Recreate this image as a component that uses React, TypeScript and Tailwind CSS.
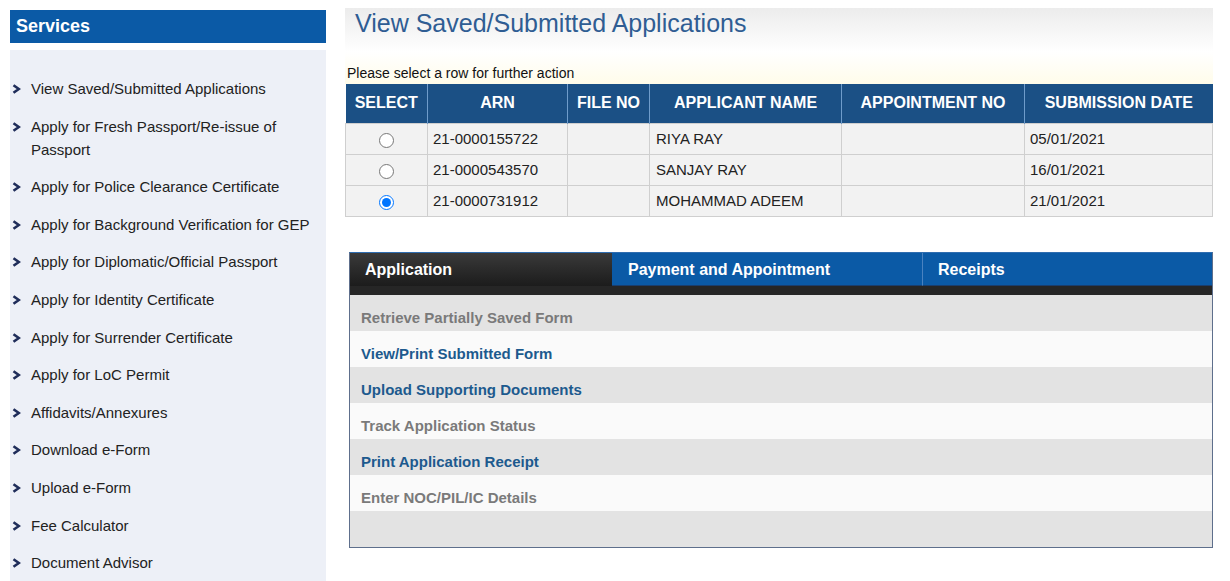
import * as React from 'react';

const services = [
  'View Saved/Submitted Applications',
  'Apply for Fresh Passport/Re-issue of Passport',
  'Apply for Police Clearance Certificate',
  'Apply for Background Verification for GEP',
  'Apply for Diplomatic/Official Passport',
  'Apply for Identity Certificate',
  'Apply for Surrender Certificate',
  'Apply for LoC Permit',
  'Affidavits/Annexures',
  'Download e-Form',
  'Upload e-Form',
  'Fee Calculator',
  'Document Advisor',
];

const rows = [
  { arn: '21-0000155722', name: 'RIYA RAY', date: '05/01/2021' },
  { arn: '21-0000543570', name: 'SANJAY RAY', date: '16/01/2021' },
  { arn: '21-0000731912', name: 'MOHAMMAD ADEEM', date: '21/01/2021' },
];

const actions = [
  { label: 'Retrieve Partially Saved Form', active: false },
  { label: 'View/Print Submitted Form', active: true },
  { label: 'Upload Supporting Documents', active: true },
  { label: 'Track Application Status', active: false },
  { label: 'Print Application Receipt', active: true },
  { label: 'Enter NOC/PIL/IC Details', active: false },
  { label: '', active: false },
];

function Chevron() {
  return (
    <svg width="9" height="10" viewBox="0 0 9 10" className="mt-[7px] shrink-0">
      <path d="M1.5 1.2 L6.8 5 L1.5 8.8" fill="none" stroke="#1f2d5a" strokeWidth="2.6" strokeLinejoin="miter" />
    </svg>
  );
}

export default function App() {
  const [selected, setSelected] = React.useState(2);

  return (
    <div className="w-[1230px] h-[581px] overflow-hidden bg-white flex font-['Liberation_Sans',Arial,sans-serif]">
      {/* sidebar */}
      <div className="ml-[10px] mt-[10px] w-[316px] flex flex-col">
        <div className="h-[33px] bg-[#0b5aa6] text-white font-bold text-[18px] leading-[33px] pl-[6px]">Services</div>
        <div className="mt-[7px] bg-[#edf0f7] min-h-[560px] pt-[27px] pl-[2px] flex flex-col gap-[14.6px]">
          {services.map((s) => (
            <div key={s} className="flex gap-[10px] text-[15px] leading-[23px] text-[#222] pr-[14px]">
              <Chevron />
              <span>{s}</span>
            </div>
          ))}
        </div>
      </div>

      {/* main */}
      <div className="ml-[19px] w-[868px] flex flex-col">
        <div className="mt-[8px] h-[44px] bg-gradient-to-b from-[#ececec] to-white pl-[10px] text-[25px] leading-[30px] text-[#2f5d93]">
          View Saved/Submitted Applications
        </div>
        <div className="h-[32px] bg-gradient-to-b from-white to-[#fffcea] flex items-end pl-[2px] text-[14px] leading-[20px] text-[#111] pb-[1px]">
          Please select a row for further action
        </div>
        <table className="border-collapse w-full text-[15px]">
          <thead>
            <tr className="bg-[#1b5085] text-white font-bold text-[16px] h-[39px]">
              <th className="w-[82px] border-r border-[#6f9ccb] font-bold">SELECT</th>
              <th className="w-[140px] border-r border-[#6f9ccb] font-bold">ARN</th>
              <th className="w-[82px] border-r border-[#6f9ccb] font-bold">FILE NO</th>
              <th className="w-[192px] border-r border-[#6f9ccb] font-bold">APPLICANT NAME</th>
              <th className="w-[183px] border-r border-[#6f9ccb] font-bold">APPOINTMENT NO</th>
              <th className="font-bold">SUBMISSION DATE</th>
            </tr>
          </thead>
          <tbody>
            {rows.map((r, i) => (
              <tr key={r.arn} className="bg-[#f2f2f2] h-[31px] text-[#222]">
                <td className="border border-[#cfcfcf] text-center">
                  <input
                    type="radio"
                    name="row"
                    checked={selected === i}
                    onChange={() => setSelected(i)}
                    className="w-[15px] h-[15px] align-middle mt-[2px]"
                  />
                </td>
                <td className="border border-[#cfcfcf] pl-[5px] pt-[1px]">{r.arn}</td>
                <td className="border border-[#cfcfcf]"></td>
                <td className="border border-[#cfcfcf] pl-[6px] pt-[1px]">{r.name}</td>
                <td className="border border-[#cfcfcf]"></td>
                <td className="border border-[#cfcfcf] pl-[5px] pt-[1px]">{r.date}</td>
              </tr>
            ))}
          </tbody>
        </table>

        {/* tabs panel */}
        <div className="mt-[35px] ml-[4px] w-[864px] border border-[#5e6f8c] border-t-[#2f6db0]">
          <div className="flex h-[33px] text-white font-bold text-[16px] leading-[33px]">
            <div className="w-[262px] bg-gradient-to-b from-[#3a3a3a] to-[#1c1c1c] pl-[15px]">Application</div>
            <div className="w-[310px] bg-[#0b5aa6] border-b border-[#1a3e6e] pl-[16px]">Payment and Appointment</div>
            <div className="flex-1 bg-[#0b5aa6] border-l border-[#4a82c0] border-b border-b-[#1a3e6e] pl-[15px]">Receipts</div>
          </div>
          <div className="h-[9px] bg-[#262626]"></div>
          {actions.map((a, i) => (
            <div
              key={i}
              className={`h-[36px] pl-[11px] pt-[14px] text-[15px] leading-[18px] font-bold ${i % 2 === 0 ? 'bg-[#e3e3e3]' : 'bg-[#fafafa]'} ${a.active ? 'text-[#1d5a8e]' : 'text-[#7a7a7a]'}`}
            >
              {a.label}
            </div>
          ))}
        </div>
      </div>
    </div>
  );
}
